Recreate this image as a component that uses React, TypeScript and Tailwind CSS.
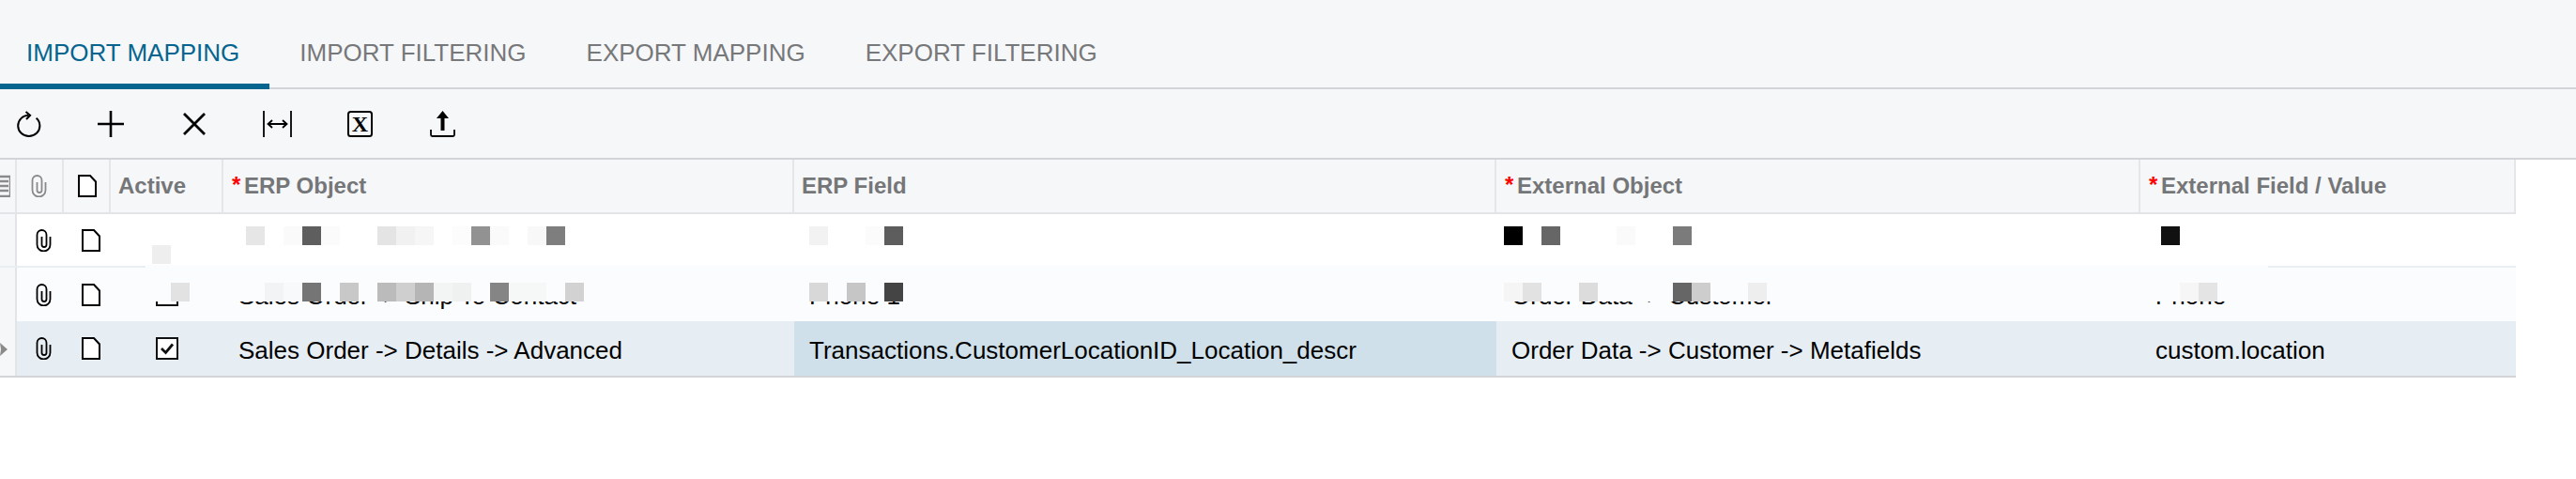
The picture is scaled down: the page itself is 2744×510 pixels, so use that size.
const tabs = ["IMPORT FILTERING", "EXPORT MAPPING", "EXPORT FILTERING"];

const gridCols = "grid grid-cols-[18px_50px_50px_120px_608px_748px_686px_400px] w-[2680px]";

// pixelated redaction blocks: [x, y, colour]
const blocks: [number, number, string][] = [
  [162, 261, "#eeeeee"],
  [262, 241, "#e6e6e6"],
  [302, 241, "#fafafa"],
  [322, 241, "#5e5e5e"],
  [342, 241, "#fbfbfb"],
  [402, 241, "#e4e4e4"],
  [422, 241, "#f1f1f1"],
  [442, 241, "#f6f6f6"],
  [482, 241, "#fcfcfc"],
  [502, 241, "#929292"],
  [522, 241, "#fafafa"],
  [562, 241, "#f8f8f8"],
  [582, 241, "#7e7e7e"],
  [862, 241, "#f2f2f2"],
  [922, 241, "#fbfbfb"],
  [942, 241, "#5d5d5d"],
  [1602, 241, "#000000"],
  [1642, 241, "#666666"],
  [1722, 241, "#fafafa"],
  [1782, 241, "#7b7b7b"],
  [2302, 241, "#111111"],
  [182, 301, "#e2e2e2"],
  [282, 301, "#f2f3f4"],
  [302, 301, "#f8f9fa"],
  [322, 301, "#757575"],
  [362, 301, "#c8c8c8"],
  [402, 301, "#bbbbbb"],
  [422, 301, "#cfcfcf"],
  [442, 301, "#b5b5b5"],
  [462, 301, "#f3f4f4"],
  [482, 301, "#eff1f1"],
  [522, 301, "#858585"],
  [542, 301, "#f6f7f7"],
  [562, 301, "#f6f7f7"],
  [602, 301, "#d2d2d2"],
  [862, 301, "#d8d8d8"],
  [902, 301, "#c6c6c6"],
  [942, 301, "#444444"],
  [1602, 301, "#f5f5f5"],
  [1622, 301, "#e2e2e2"],
  [1682, 301, "#dcdcdc"],
  [1782, 301, "#666666"],
  [1802, 301, "#cdcdcd"],
  [1862, 301, "#eeeeee"],
  [2322, 301, "#f6f6f6"],
  [2342, 301, "#e4e4e4"],
];

function Clip({ className = "text-black" }: { className?: string }) {
  return (
    <svg width="17" height="24" viewBox="0 0 17 24" fill="none" stroke="currentColor" strokeWidth="1.8" className={className}>
      <path d="M15.5 8v8.5a7 7 0 0 1-14 0V6a5 5 0 0 1 10 0v10.5a2.5 2.5 0 0 1-5 0V8" />
    </svg>
  );
}

function FileIcon() {
  return (
    <svg width="20" height="24" viewBox="0 0 20 24" fill="#fff" stroke="#000" strokeWidth="2">
      <path d="M1 1h12l6 6.5V23H1z" />
    </svg>
  );
}

function Checkbox({ checked }: { checked?: boolean }) {
  return (
    <svg width="24" height="24" viewBox="0 0 24 24" fill="#fff" stroke="#111" strokeWidth="2">
      <rect x="1" y="1" width="22" height="22" />
      {checked && <path d="M6 12l4.5 4.5L18 7.5" fill="none" strokeWidth="2.8" />}
    </svg>
  );
}

function Toolbar() {
  const btn = "flex justify-center w-[88px] shrink-0";
  return (
    <div className="flex items-center h-[75px] bg-[#f6f7f9] border-b-2 border-[#d3d4d7]">
      <div className={`${btn} -ml-[13px]`}>
        <svg width="26" height="28" viewBox="0 0 26 28" fill="none" stroke="#000" strokeWidth="2">
          <path d="M12.5 4.8C6 4.800 1.200 10 1.200 16a11.600 11 0 0 0 23.200 0c0-3.400-1.400-6.200-3.800-8.200" />
          <path d="M9.500 1l4.600 3.800L10 9" />
        </svg>
      </div>
      <div className={btn}>
        <svg width="28" height="28" viewBox="0 0 28 28" stroke="#000" strokeWidth="2.600" className="-ml-[2px]">
          <path d="M0 14h28M14 0v28" />
        </svg>
      </div>
      <div className={btn}>
        <svg width="24" height="24" viewBox="0 0 24 24" stroke="#000" strokeWidth="2.800">
          <path d="M1 1l22 22M23 1L1 23" />
        </svg>
      </div>
      <div className={btn}>
        <svg width="31" height="28" viewBox="0 0 31 28" fill="none" stroke="#000" strokeWidth="1.800">
          <path d="M1 0v28M30 0v28M6 14h19" />
          <path d="M10 10l-4.500 4 4.500 4M21 10l4.500 4-4.500 4" />
        </svg>
      </div>
      <div className={btn}>
        <svg width="27" height="28" viewBox="0 0 27 28" fill="none">
          <rect x="1" y="1" width="25" height="26" rx="2.500" stroke="#000" strokeWidth="2" />
          <text x="13.500" y="21.500" textAnchor="middle" fontSize="24" fontWeight="700" fill="#000" fontFamily="Liberation Serif, serif">X</text>
        </svg>
      </div>
      <div className={btn}>
        <svg width="27" height="28" viewBox="0 0 27 28" fill="none">
          <path d="M13.500 0l6.500 8h-4.500v13h-4V8H7z" fill="#000" />
          <path d="M1 20v5.500a1.500 1.500 0 0 0 1.500 1.500h22a1.500 1.500 0 0 0 1.500-1.500V20" stroke="#000" strokeWidth="1.800" />
        </svg>
      </div>
    </div>
  );
}

function Header() {
  const th = "flex items-center h-[56px] border-r-2 border-[#e4e6e9] text-[24px] font-bold text-[#757678]";
  const star = <span className="text-[#ff0000] w-[13px] mt-[-2px]">*</span>;
  return (
    <div className={`${gridCols} border-b-2 border-[#e2e4e7] bg-[#f6f7f9] h-[58px]`}>
      <div className={`${th} overflow-hidden`}>
        <svg width="16" height="24" viewBox="0 0 16 24" className="-ml-[5px] shrink-0" fill="none" stroke="#8a8a8a" strokeWidth="2.400">
          <path d="M1 2h15v21H1zM4 7h10M4 12h10M4 17h10" />
        </svg>
      </div>
      <div className={`${th} pl-[15px]`}>
        <Clip className="text-[#8a8a8a]" />
      </div>
      <div className={`${th} pl-[15px]`}>
        <FileIcon />
      </div>
      <div className={`${th} pl-[8px]`}>Active</div>
      <div className={`${th} pl-[9px]`}>{star}ERP Object</div>
      <div className={`${th} pl-[8px]`}>ERP Field</div>
      <div className={`${th} pl-[9px]`}>{star}External Object</div>
      <div className={`${th} pl-[9px]`}>{star}External Field / Value</div>
    </div>
  );
}

interface RowProps {
  values?: string[];
  checked?: boolean;
  selected?: boolean;
  bg: string;
  border: string;
  height: string;
}

function Row({ values, checked, selected, bg, border, height }: RowProps) {
  const td = "flex items-center text-[26px] text-black whitespace-nowrap pl-[16px] pt-[4px]";
  return (
    <div className={`${gridCols} ${bg} ${border} ${height}`}>
      <div className="flex items-center bg-[#f6f7f9] border-r-2 border-[#e2e4e7] overflow-hidden">
        {selected && (
          <svg width="8" height="14" viewBox="0 0 8 14" fill="#8a8a8a" className="mt-[2px]">
            <path d="M0 0l8 7-8 7 1-7z" />
          </svg>
        )}
      </div>
      <div className="flex items-center pl-[20px]">
        <Clip />
      </div>
      <div className="flex items-center pl-[19px]">
        <FileIcon />
      </div>
      <div className="flex items-center pl-[48px]">
        {checked !== undefined && <Checkbox checked={checked} />}
      </div>
      {values ? (
        <>
          <div className={td}>{values[0]}</div>
          <div className={`${td} ${selected ? "bg-[#cfe0ea]" : ""}`}>{values[1]}</div>
          <div className={td}>{values[2]}</div>
          <div className={td}>{values[3]}</div>
        </>
      ) : (
        <div className="col-span-4" />
      )}
    </div>
  );
}

export default function App() {
  return (
    <div className="relative w-[2744px] h-[510px] bg-white font-['Liberation_Sans',sans-serif] overflow-hidden">
      <div className="flex h-[95px] bg-[#f6f7f9] border-b-2 border-[#d3d4d7] text-[26px] leading-[32px]">
        <div className="h-[95px] pt-[40px] pl-[28px] pr-[32px] text-[#05658f] border-b-[6px] border-[#05658f]">
          IMPORT MAPPING
        </div>
        {tabs.map((tab) => (
          <div key={tab} className="pt-[40px] px-[32px] text-[#77787a]">
            {tab}
          </div>
        ))}
      </div>
      <Toolbar />
      <Header />
      <Row bg="bg-white" border="border-b-2 border-[#e8eef2]" height="h-[57px]" />
      <Row
        values={["Sales Order -> Ship To Contact", "Phone 1", "Order Data -> Customer", "Phone"]}
        checked={false}
        bg="bg-[#fbfcfe]"
        border=""
        height="h-[57px]"
      />
      <Row
        values={["Sales Order -> Details -> Advanced", "Transactions.CustomerLocationID_Location_descr", "Order Data -> Customer -> Metafields", "custom.location"]}
        checked
        selected
        bg="bg-[#e6eef4]"
        border="border-b-2 border-[#d3d4d7]"
        height="h-[60px]"
      />

      {/* redaction over rows 1 and 2 */}
      <div className="absolute left-[155px] top-[282px] w-[2261px] h-[39px] bg-[#fbfcfe]" />
      {blocks.map(([x, y, colour]) => (
        <div
          key={`${x}-${y}`}
          className="absolute w-[20px] h-[20px]"
          style={{ left: x, top: y, backgroundColor: colour }}
        />
      ))}
    </div>
  );
}
